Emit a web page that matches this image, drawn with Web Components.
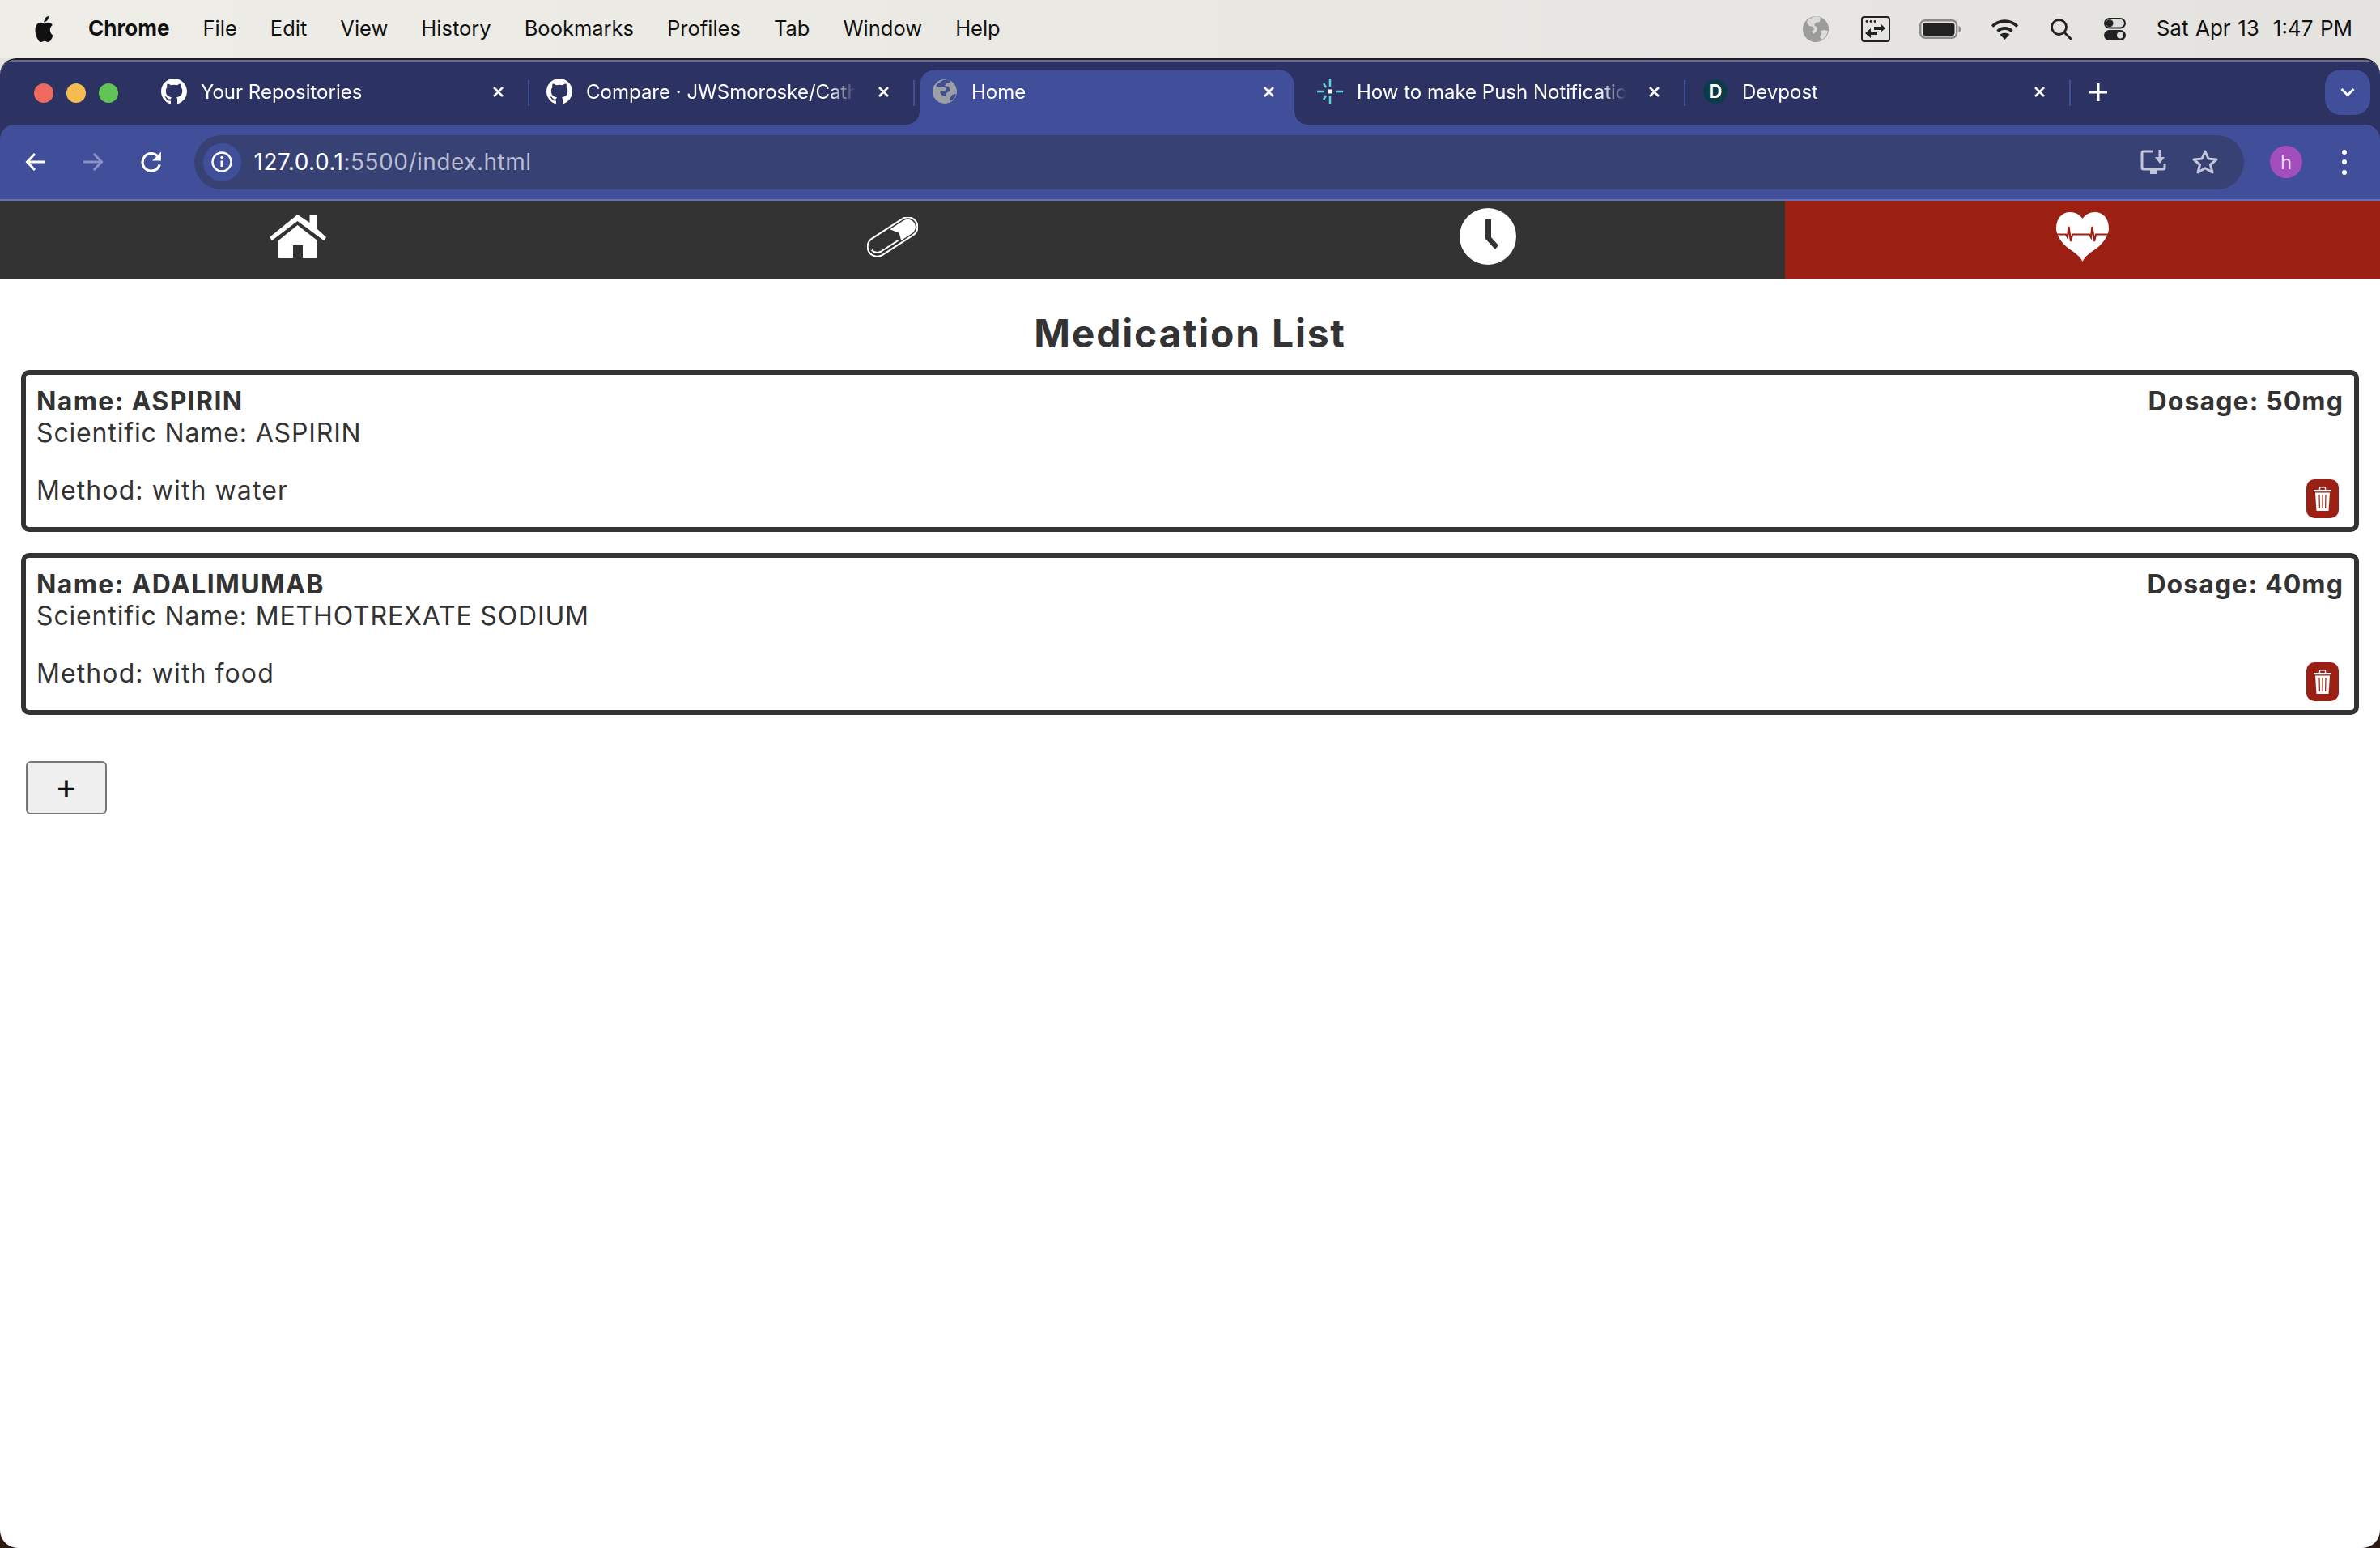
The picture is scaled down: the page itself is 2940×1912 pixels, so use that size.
<!DOCTYPE html>
<html lang="en">
<head>
<meta charset="utf-8">
<title>Home</title>
<style>
  html, body { margin: 0; height: 100%; }
  body {
    display: flex;
    flex-direction: column;
    font-family: Inter, "Liberation Sans", sans-serif;
    background: linear-gradient(#e4e2de 0 300px, #2a1a10 300px);
  }
</style>
</head>
<body>
  <mac-menubar></mac-menubar>
  <browser-window>
    <tab-strip slot="chrome">
      <browser-tab icon="github">Your Repositories</browser-tab>
      <browser-tab icon="github">Compare · JWSmoroske/CatheterCare</browser-tab>
      <browser-tab icon="globe" active nosep>Home</browser-tab>
      <browser-tab icon="spark">How to make Push Notifications</browser-tab>
      <browser-tab icon="devpost">Devpost</browser-tab>
    </tab-strip>
    <browser-toolbar slot="chrome"></browser-toolbar>
    <app-nav></app-nav>
    <med-list>
      <med-card>
        <span slot="name">Name: ASPIRIN</span>
        <span slot="dosage">Dosage: 50mg</span>
        <span slot="scientific">Scientific Name: ASPIRIN</span>
        <span slot="method">Method: with water</span>
      </med-card>
      <med-card>
        <span slot="name">Name: ADALIMUMAB</span>
        <span slot="dosage">Dosage: 40mg</span>
        <span slot="scientific">Scientific Name: METHOTREXATE SODIUM</span>
        <span slot="method">Method: with food</span>
      </med-card>
    </med-list>
  </browser-window>

<script>
// inline svg for everything, keyed by name
const ICONS = {
  apple: `<svg width="27" height="32" viewBox="0 0 24 24" preserveAspectRatio="none" fill="#111"><path d="M12.152 6.896c-.948 0-2.415-1.078-3.96-1.04-2.04.027-3.91 1.183-4.961 3.014-2.117 3.675-.546 9.103 1.519 12.09 1.013 1.454 2.208 3.09 3.792 3.039 1.52-.065 2.09-.987 3.935-.987 1.831 0 2.35.987 3.96.948 1.637-.026 2.676-1.48 3.676-2.948 1.156-1.688 1.636-3.325 1.662-3.415-.039-.013-3.182-1.221-3.22-4.857-.026-3.04 2.48-4.494 2.597-4.559-1.429-2.09-3.623-2.324-4.39-2.376-2-.156-3.675 1.09-4.61 1.09zM15.53 3.83c.843-1.012 1.4-2.427 1.245-3.83-1.207.052-2.662.805-3.532 1.818-.78.896-1.454 2.338-1.273 3.714 1.338.104 2.715-.688 3.559-1.701"/></svg>`,
  menuGlobe: `<svg width="32" height="32" viewBox="0 0 32 32"><circle cx="16" cy="16" r="16" fill="#9c9c9a"/><path d="M12 1c-3 2-6 3-7 7l3 4 5 1 1 4-3 1 2 4 4-3 1-5-4-3 2-3 5-1 1-5c-3-2-6-2-10-1zM22 18l4-1 5 1c-1 5-3 8-7 11l-3-3 2-4z" fill="#dcdbd7"/></svg>`,
  menuWindow: `<svg width="36" height="32" viewBox="0 0 36 32"><rect x="1" y="1" width="34" height="30" rx="3" fill="none" stroke="#222" stroke-width="2"/><circle cx="7" cy="6.5" r="1.4" fill="#222"/><circle cx="12" cy="6.5" r="1.4" fill="#222"/><circle cx="17" cy="6.5" r="1.4" fill="#222"/><path d="M16 13h8V9l6 6-6 5v-3h-8zM20 19h-8v-4l-7 6 7 6v-4h8z" fill="#222"/></svg>`,
  battery: `<svg width="52" height="24" viewBox="0 0 52 24"><rect x="1.2" y="1.2" width="45" height="21.6" rx="6" fill="none" stroke="#8b8a86" stroke-width="2.4"/><rect x="4" y="4" width="39.5" height="16" rx="3.5" fill="#222"/><path d="M48.5 8c2 .8 3 2.2 3 4s-1 3.2-3 4z" fill="#8b8a86"/></svg>`,
  wifi: `<svg width="35" height="26" viewBox="0 0 35 26" fill="none" stroke="#222" stroke-width="3.6"><path d="M2 9.5C11 1 24 1 33 9.5"/><path d="M8.500 15.500c5.500-4.800 12.500-4.800 18 0"/><path d="M17.500 26l-6-6.500c3.500-2.500 8.500-2.500 12 0z" fill="#222" stroke="none"/></svg>`,
  search: `<svg width="26" height="26" viewBox="0 0 26 26" fill="none" stroke="#222" stroke-width="2.800"><circle cx="10.500" cy="10.500" r="9"/><path d="M17 17l8 8" stroke-linecap="round"/></svg>`,
  controls: `<svg width="27" height="28" viewBox="0 0 27 28"><rect x="1" y="1" width="25" height="11.500" rx="5.700" fill="#ddd" stroke="#222" stroke-width="2"/><circle cx="7" cy="6.700" r="4.500" fill="#222"/><rect x="0" y="15" width="27" height="13" rx="6.500" fill="#222"/><circle cx="20" cy="21.500" r="4" fill="#ddd"/></svg>`,

  github: `<svg width="32" height="32" viewBox="0 0 16 16" fill="#fff"><path d="M8 0C3.58 0 0 3.58 0 8c0 3.54 2.29 6.53 5.47 7.59.4.07.55-.17.55-.38 0-.19-.01-.82-.01-1.49-2.01.37-2.53-.49-2.69-.94-.09-.23-.48-.94-.82-1.13-.28-.15-.68-.52-.01-.53.63-.01 1.08.58 1.23.82.72 1.21 1.87.87 2.33.66.07-.52.28-.87.51-1.07-1.78-.2-3.64-.89-3.64-3.95 0-.87.31-1.59.82-2.15-.08-.2-.36-1.02.08-2.12 0 0 .67-.21 2.2.82.64-.18 1.32-.27 2-.27.68 0 1.36.09 2 .27 1.53-1.04 2.2-.82 2.2-.82.44 1.1.16 1.92.08 2.12.51.56.82 1.27.82 2.15 0 3.07-1.87 3.75-3.65 3.95.29.25.54.73.54 1.48 0 1.07-.01 1.93-.01 2.2 0 .21.15.46.55.38A8.013 8.013 0 0016 8c0-4.420-3.58-8-8-8z"/></svg>`,
  globe: `<svg width="30" height="30" viewBox="0 0 30 30"><circle cx="15" cy="15" r="15" fill="#9aa0a6"/><path d="M13 1c-3 2-7 4-9 7l4 2 5-1 4 2-2 4-4-1-2 2 3 4 4 1 1-4 5-3-2-5-5-1 2-3 5-1-1-3c-2-1-5-1-8 0zM21 24l3-5 5-1c-1 4-3 7-7 9z" fill="#434e8d"/></svg>`,
  spark: `<svg width="32" height="32" viewBox="0 0 32 32"><g stroke="#5fd3dc" stroke-width="2.500" fill="none"><path d="M16 0v10M16 22v10M0 16h9M23 16h9"/><path d="M8 6l3 5M8 26l3-5"/></g><rect x="13.500" y="13.500" width="5" height="5" fill="#fff"/></svg>`,
  devpost: `<svg width="30" height="32" viewBox="0 0 30 32"><circle cx="15" cy="16" r="15" fill="#0b3c49"/><text x="15" y="24" text-anchor="middle" font-family="Inter, sans-serif" font-size="23" font-weight="700" fill="#fff">D</text></svg>`,

  back: `<svg width="26" height="24" viewBox="0 0 26 24" fill="none" stroke="currentColor" stroke-width="3"><path d="M25 12H3M12 2L2.500 12 12 22"/></svg>`,
  forward: `<svg width="26" height="24" viewBox="0 0 26 24" fill="none" stroke="currentColor" stroke-width="3"><path d="M1 12h22M14 2l9.500 10L14 22"/></svg>`,
  reload: `<svg width="28" height="28" viewBox="0 0 26 26" fill="none" stroke="currentColor" stroke-width="3"><path d="M22.500 16a10 10 0 1 1-1.500-8.500"/><path d="M24 1.500v10H14" stroke="none" fill="currentColor"/></svg>`,
  info: `<svg width="26" height="26" viewBox="0 0 26 26" fill="none" stroke="#fff" stroke-width="2.400"><circle cx="13" cy="13" r="11.500"/><path d="M13 11.500v7.500" stroke-width="3"/><circle cx="13" cy="7.500" r="1.700" fill="#fff" stroke="none"/></svg>`,
  install: `<svg width="32" height="32" viewBox="0 0 32 32" fill="none" stroke="#c3c6d8" stroke-width="3"><path d="M16 3H4a2 2 0 0 0-2 2v18a2 2 0 0 0 2 2h24a2 2 0 0 0 2-2v-5"/><path d="M12 25v6h8v-6" fill="#c3c6d8" stroke="none"/><path d="M24 1v12" stroke-width="3"/><path d="M18 10h12l-6 8z" fill="#c3c6d8" stroke="none"/></svg>`,
  star: `<svg width="32" height="32" viewBox="0 0 32 32" fill="none" stroke="#c3c6d8" stroke-width="3" stroke-linejoin="round"><path d="M16 3l4 9 10 1-7.500 6.500L25 29l-9-5.300L7 29l2.500-9.500L2 13l10-1z"/></svg>`,

  home: `<svg width="70" height="54" viewBox="0 0 70 54" fill="#fff"><path d="M34.500 0L49.500 10V0H59V18L70 28 67 32 34.500 8 3 32 0 28z"/><path d="M34.500 13L59 32V53q0 1-1 1H41V38H29V54H12q-1 0-1-1V32z"/></svg>`,
  pill: `<svg width="63" height="49" viewBox="0 0 63 49" fill="none"><g transform="rotate(-33 31.500 24.500)"><rect x="-3" y="12.500" width="69" height="24" rx="12" stroke="#fff" stroke-width="2.200"/><path d="M34 15H54a9.500 9.500 0 0 1 0 19H38L41 25z" fill="#fff"/><path d="M1 24a10 10 0 0 0 9 8H35" stroke="#fff" stroke-width="2"/></g></svg>`,
  clock: `<svg width="70" height="70" viewBox="0 0 70 70"><circle cx="35" cy="35" r="35" fill="#fff"/><path d="M32 14h7v22l9 10-4 5-12-13z" fill="#333"/></svg>`,
  heart: `<svg width="65" height="61" viewBox="0 0 65 61"><path d="M32.500 8C29 3 24 0 17 0 7 0 0 8 0 20 0 28 6 37 13 43 19 48 28 52 32.500 61 37 52 46 48 52 43 59 37 65 28 65 20 65 8 58 0 48 0 41 0 36 3 32.500 8z" fill="#fff"/><path d="M0 27.500H12L14 31 15.500 18 18 36 20 27.500H41L43 31 44.500 18 47 36 49 27.500H65" fill="none" stroke="#9b1f12" stroke-width="2.200"/></svg>`,
  trash: `<svg width="22" height="30" viewBox="0 0 22 30"><path d="M7.500 4V.8h7V4" fill="none" stroke="#fff" stroke-width="1.300"/><rect y="4" width="22" height="2.200" fill="#fff"/><path d="M2 7.500H20L18.500 30H3.500z" fill="#fff"/><path d="M7 10l.4 17M11 10v17M15 10l-.4 17" stroke="#9b1f12" stroke-width="1.200"/></svg>`
};

class UiIcon extends HTMLElement {
  connectedCallback() {
    this.attachShadow({ mode: 'open' });
    this.shadowRoot.innerHTML = `
      <style>:host { display: inline-flex; flex: none; align-items: center; justify-content: center; } svg { display: block; }</style>
      ${ICONS[this.getAttribute('name')]}`;
  }
}

class MacMenubar extends HTMLElement {
  constructor() {
    super();
    this.attachShadow({ mode: 'open' });
    const items = ['File', 'Edit', 'View', 'History', 'Bookmarks', 'Profiles', 'Tab', 'Window', 'Help'];
    this.shadowRoot.innerHTML = `
      <style>
        :host {
          display: flex;
          flex: none;
          align-items: center;
          height: 72px;
          padding: 0 34px 0 41px;
          box-sizing: border-box;
          background: linear-gradient(90deg, #eeede8, #e5e3df);
          color: #111;
          font-size: 25.500px;
        }
        .left { display: flex; align-items: center; gap: 41px; }
        .left span, .clock { margin-bottom: 3px; }
        .app { font-weight: 700; font-size: 26px; }
        .right { display: flex; align-items: center; margin-left: auto; }
        .right ui-icon:nth-child(1) { margin-right: 40px; }
        .right ui-icon:nth-child(2) { margin-right: 36px; }
        .right ui-icon:nth-child(3) { margin-right: 36px; }
        .right ui-icon:nth-child(4) { margin-right: 39px; }
        .right ui-icon:nth-child(5) { margin-right: 40px; }
        .right ui-icon:nth-child(6) { margin-right: 38px; }
        .clock { font-size: 26px; word-spacing: 1.200px; white-space: pre; }
      </style>
      <div class="left">
        <ui-icon name="apple"></ui-icon>
        <span class="app">Chrome</span>
        ${items.map((item) => `<span>${item}</span>`).join('')}
      </div>
      <div class="right">
        <ui-icon name="menuGlobe"></ui-icon>
        <ui-icon name="menuWindow"></ui-icon>
        <ui-icon name="battery"></ui-icon>
        <ui-icon name="wifi"></ui-icon>
        <ui-icon name="search"></ui-icon>
        <ui-icon name="controls"></ui-icon>
        <span class="clock">Sat Apr 13  1:47 PM</span>
      </div>`;
  }
}

class BrowserWindow extends HTMLElement {
  constructor() {
    super();
    this.attachShadow({ mode: 'open' });
    this.shadowRoot.innerHTML = `
      <style>
        :host {
          display: flex;
          flex: 1;
          flex-direction: column;
          min-height: 0;
          overflow: hidden;
          background: #fff;
          border-radius: 20px 20px 22px 22px;
          border-top: 2px solid #1d1d22;
        }
      </style>
      <slot name="chrome"></slot>
      <slot></slot>`;
  }
}

class TabStrip extends HTMLElement {
  constructor() {
    super();
    this.attachShadow({ mode: 'open' });
    this.shadowRoot.innerHTML = `
      <style>
        :host {
          display: flex;
          flex: none;
          height: 80px;
          box-sizing: border-box;
          padding-top: 10px;
          background: #2c3363;
          border-top: 2px solid #666c95;
        }
        .lights { display: flex; width: 178px; flex: none; gap: 16px; padding: 17px 0 0 42px; box-sizing: border-box; }
        .lights i { width: 24px; height: 24px; border-radius: 50%; }
        .new {
          width: 68px;
          flex: none;
          display: flex;
          justify-content: center;
          padding-top: 17px;
          box-sizing: border-box;
        }
        .new svg { display: block; }
        .more {
          width: 56px;
          height: 56px;
          margin: 0 12px 0 auto;
          flex: none;
          border-radius: 20px;
          background: #414f9a;
          display: flex;
          align-items: center;
          justify-content: center;
        }
      </style>
      <div class="lights">
        <i style="background:#ee6a5e"></i><i style="background:#f5bd4f"></i><i style="background:#61c454"></i>
      </div>
      <slot></slot>
      <div class="new"><svg width="22" height="22" viewBox="0 0 22 22" stroke="#fff" stroke-width="3"><path d="M11 0v22M0 11h22"/></svg></div>
      <div class="more"><svg width="18" height="12" viewBox="0 0 18 12" fill="none" stroke="#fff" stroke-width="3"><path d="M1.500 2L9 9.500 16.500 2"/></svg></div>`;
  }
}

class BrowserTab extends HTMLElement {
  constructor() {
    super();
    this.attachShadow({ mode: 'open' });
  }

  connectedCallback() {
    this.shadowRoot.innerHTML = `
      <style>
        :host {
          display: block;
          flex: none;
          position: relative;
          z-index: 0;
          width: 476px;
          height: 68px;
          color: #fff;
          font-size: 24px;
        }
        .tab {
          display: flex;
          align-items: center;
          height: 54px;
          padding-left: 21px;
        }
        .fav { width: 32px; display: flex; justify-content: center; flex: none; margin-right: 17px; }
        .title {
          width: 333px;
          flex: none;
          overflow: hidden;
          white-space: nowrap;
          -webkit-mask-image: linear-gradient(90deg, #000 300px, transparent 333px);
          mask-image: linear-gradient(90deg, #000 300px, transparent 333px);
        }
        .close { width: 13px; height: 13px; flex: none; margin-left: 28px; }
        .sep {
          position: absolute;
          right: 0;
          top: 13px;
          width: 2px;
          height: 32px;
          background: #414f9a;
        }
        :host([active]) .bg {
          position: absolute;
          inset: 0 7px 0 6px;
          background: #414f9a;
          border-radius: 20px 20px 0 0;
          z-index: -1;
        }
        :host([active]) .bg::before, :host([active]) .bg::after {
          content: '';
          position: absolute;
          bottom: 0;
          width: 16px;
          height: 16px;
        }
        :host([active]) .bg::before { left: -16px; background: radial-gradient(circle at 0 0, transparent 15.500px, #414f9a 16px); }
        :host([active]) .bg::after { right: -16px; background: radial-gradient(circle at 100% 0, transparent 15.500px, #414f9a 16px); }
        :host([nosep]) .sep { display: none; }
      </style>
      <div class="bg"></div>
      <div class="tab">
        <span class="fav"><ui-icon name="${this.getAttribute('icon')}"></ui-icon></span>
        <span class="title"><slot></slot></span>
        <svg class="close" viewBox="0 0 13 13" stroke="#fff" stroke-width="2.600"><path d="M1 1l11 11M12 1L1 12"/></svg>
      </div>
      <div class="sep"></div>`;
  }
}

class BrowserToolbar extends HTMLElement {
  constructor() {
    super();
    this.attachShadow({ mode: 'open' });
    this.shadowRoot.innerHTML = `
      <style>
        :host {
          display: block;
          flex: none;
          background: #2c3363;
        }
        .bar {
          display: flex;
          align-items: center;
          height: 92px;
          padding: 0 9px 0 8px;
          box-sizing: border-box;
          background: #414f9a;
          border-radius: 18px 18px 0 0;
          color: #fff;
        }
        .line { height: 2px; background: #6672b3; }
        .btn { width: 71.500px; display: flex; justify-content: center; flex: none; }
        .btn.off { color: #8a92c6; }
        .omnibox {
          flex: 1;
          display: flex;
          align-items: center;
          height: 67px;
          margin: 0 17px;
          padding-left: 11px;
          border-radius: 34px;
          background: #384173;
        }
        .info {
          width: 47px;
          height: 47px;
          border-radius: 50%;
          background: #414f9a;
          display: flex;
          align-items: center;
          justify-content: center;
          margin-right: 16px;
          flex: none;
        }
        .url { font-size: 28px; letter-spacing: 0.500px; color: #b9bcd4; }
        .url b { font-weight: 400; color: #fff; }
        .tools { display: flex; margin-left: auto; padding-right: 16px; }
        .tools ui-icon { width: 64px; }
        .avatar {
          width: 40px;
          height: 40px;
          border-radius: 50%;
          background: #a24ebd;
          color: #e9d5f0;
          font-size: 24px;
          display: flex;
          align-items: center;
          justify-content: center;
          margin: 0 15px;
          flex: none;
        }
        .kebab { width: 70px; margin-left: 2px; display: flex; flex-direction: column; align-items: center; gap: 6.500px; flex: none; }
        .kebab i { width: 6px; height: 6px; border-radius: 50%; background: #fff; }
      </style>
      <div class="bar">
        <span class="btn"><ui-icon name="back"></ui-icon></span>
        <span class="btn off"><ui-icon name="forward"></ui-icon></span>
        <span class="btn"><ui-icon name="reload"></ui-icon></span>
        <div class="omnibox">
          <span class="info"><ui-icon name="info"></ui-icon></span>
          <span class="url"><b>127.0.0.1</b>:5500/index.html</span>
          <div class="tools"><ui-icon name="install"></ui-icon><ui-icon name="star"></ui-icon></div>
        </div>
        <span class="avatar">h</span>
        <span class="kebab"><i></i><i></i><i></i></span>
      </div>
      <div class="line"></div>`;
  }
}

class AppNav extends HTMLElement {
  constructor() {
    super();
    this.attachShadow({ mode: 'open' });
    const items = [
      { icon: 'home' },
      { icon: 'pill' },
      { icon: 'clock' },
      { icon: 'heart', active: true }
    ];
    this.shadowRoot.innerHTML = `
      <style>
        :host {
          display: grid;
          flex: none;
          grid-template-columns: repeat(4, 1fr);
          height: 96px;
          background: #333;
        }
        a { display: flex; align-items: center; justify-content: center; padding-bottom: 8px; box-sizing: border-box; }
        a.active { background: #9b1f12; }
      </style>
      ${items.map((item) => `<a class="${item.active ? 'active' : ''}"><ui-icon name="${item.icon}"></ui-icon></a>`).join('')}`;
  }
}

class MedList extends HTMLElement {
  constructor() {
    super();
    this.attachShadow({ mode: 'open' });
    this.shadowRoot.innerHTML = `
      <style>
        :host {
          display: block;
          padding: 38px 26px 0;
          color: #333;
        }
        h1 {
          margin: 0 0 16px;
          text-align: center;
          font-size: 48px;
          line-height: 59px;
          font-weight: 700;
          letter-spacing: 1.750px;
        }
        .cards { display: flex; flex-direction: column; gap: 26px; }
        button {
          display: block;
          width: 100px;
          height: 66px;
          margin: 57px 0 0 6px;
          padding: 0 0 4px;
          box-sizing: border-box;
          background: #efefef;
          border: 2px solid #767676;
          border-radius: 6px;
          color: #111;
          font: 400 42px/1 Inter, "Liberation Sans", sans-serif;
        }
      </style>
      <h1>Medication List</h1>
      <div class="cards"><slot></slot></div>
      <button>+</button>`;
  }
}

class MedCard extends HTMLElement {
  constructor() {
    super();
    this.attachShadow({ mode: 'open' });
    this.shadowRoot.innerHTML = `
      <style>
        :host {
          display: block;
          height: 200px;
          box-sizing: border-box;
          padding: 13px 13px 11px 13px;
          border: 6px solid #333;
          border-radius: 10px;
          font-size: 32px;
          line-height: 39px;
          letter-spacing: 0.850px;
        }
        .row { display: flex; justify-content: space-between; }
        .strong { font-weight: 700; letter-spacing: 1.350px; }
        .strong slot[name="dosage"] { letter-spacing: 1.100px; }
        .method { margin-top: 32px; align-items: flex-start; letter-spacing: 1.100px; }
        .trash {
          width: 40px;
          height: 48px;
          margin: 6px 6px 0 0;
          border-radius: 10px;
          background: #9b1f12;
          display: flex;
          align-items: center;
          justify-content: center;
        }
      </style>
      <div class="row strong"><slot name="name"></slot><slot name="dosage"></slot></div>
      <div><slot name="scientific"></slot></div>
      <div class="row method">
        <slot name="method"></slot>
        <span class="trash"><ui-icon name="trash"></ui-icon></span>
      </div>`;
  }
}

customElements.define('ui-icon', UiIcon);
customElements.define('mac-menubar', MacMenubar);
customElements.define('browser-window', BrowserWindow);
customElements.define('tab-strip', TabStrip);
customElements.define('browser-tab', BrowserTab);
customElements.define('browser-toolbar', BrowserToolbar);
customElements.define('app-nav', AppNav);
customElements.define('med-list', MedList);
customElements.define('med-card', MedCard);
</script>
</body>
</html>
